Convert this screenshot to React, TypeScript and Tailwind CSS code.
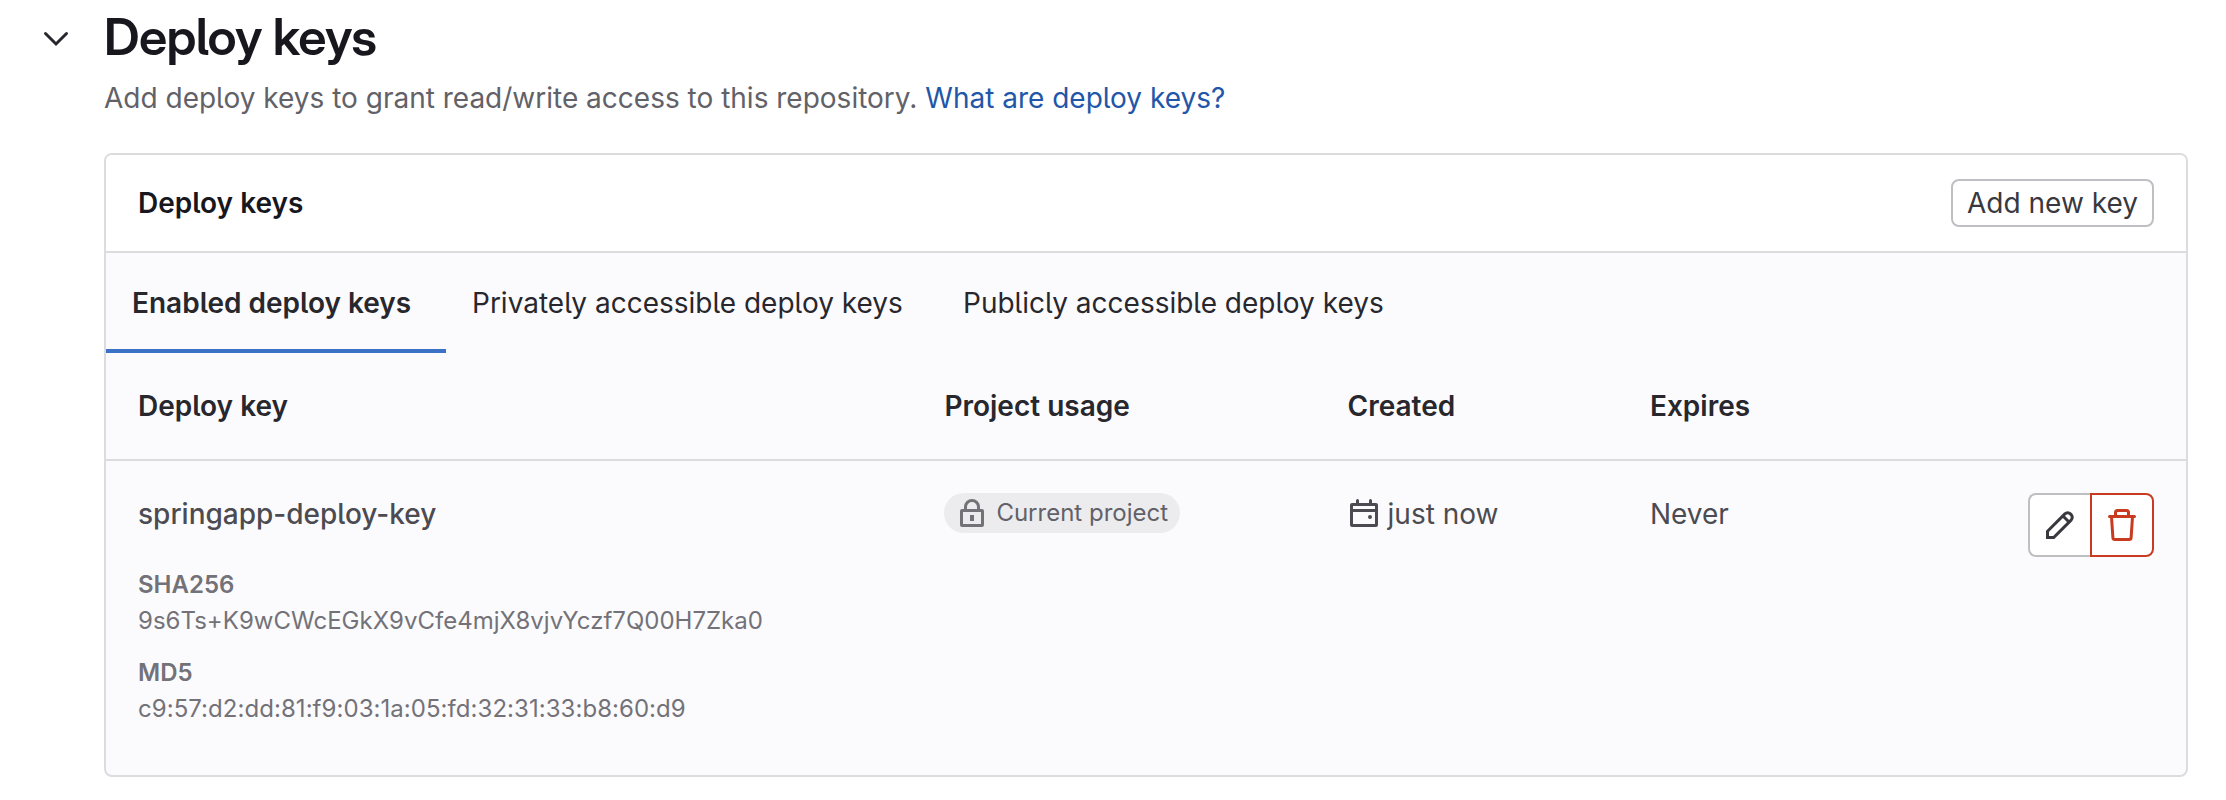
import React from "react";

const tabs = ["Privately accessible deploy keys", "Publicly accessible deploy keys"];

function ChevronDown() {
  return (
    <svg viewBox="0 0 16 16" className="h-8 w-8" fill="none" stroke="#28272d" strokeWidth="1.5" strokeLinecap="round" strokeLinejoin="miter">
      <path d="M2.75 5.75 8 11l5.25-5.25" />
    </svg>
  );
}

function Lock() {
  return (
    <svg viewBox="0 0 16 16" className="h-8 w-8 shrink-0" fill="#737278">
      <path
        fillRule="evenodd"
        clipRule="evenodd"
        d="M8 1a4 4 0 0 0-4 4v1H3a1 1 0 0 0-1 1v7a1 1 0 0 0 1 1h10a1 1 0 0 0 1-1V7a1 1 0 0 0-1-1h-1V5a4 4 0 0 0-4-4zm2.500 5V5a2.500 2.500 0 0 0-5 0v1h5zM3.500 7.500v6h9v-6h-9zM7 9v3h2V9H7z"
      />
    </svg>
  );
}

function Calendar() {
  return (
    <svg viewBox="0 0 16 16" className="h-8 w-8 shrink-0" fill="#4c4b51">
      <path
        fillRule="evenodd"
        clipRule="evenodd"
        d="M5.500 1.750a.75.75 0 0 0-1.500 0V3H2a1 1 0 0 0-1 1v10a1 1 0 0 0 1 1h12a1 1 0 0 0 1-1V4a1 1 0 0 0-1-1h-2V1.750a.75.75 0 0 0-1.500 0V3h-5V1.750zM2.500 4.500V6h11V4.500h-11zm0 3v6h11v-6h-11zM11 11a1 1 0 1 0 0-2 1 1 0 0 0 0 2z"
      />
    </svg>
  );
}

function Pencil() {
  return (
    <svg viewBox="0 0 16 16" className="h-8 w-8 shrink-0" fill="none" stroke="#3a383f" strokeWidth="1.5">
      <path d="M1.750 14.250v-3.100l8.700-8.700a1.950 1.950 0 0 1 2.760 0l.34.34a1.950 1.950 0 0 1 0 2.760l-8.700 8.700z" />
      <path d="M9.500 3.500l3 3" />
    </svg>
  );
}

function Trash() {
  return (
    <svg viewBox="0 0 16 16" className="h-8 w-8 shrink-0" fill="none" stroke="#c93b21" strokeWidth="1.5">
      <path d="M1.750 3.750h12.500" strokeLinecap="round" />
      <path d="M4.750 3.500V1.750a1 1 0 0 1 1-1h4.500a1 1 0 0 1 1 1V3.500" />
      <path d="M2.750 4l.7 10.300a1 1 0 0 0 1 .95h7.100a1 1 0 0 0 1-.95L13.250 4" />
    </svg>
  );
}

function Fingerprint({ label, value, className }: { label: string; value: string; className: string }) {
  return (
    <div className="text-[24px] leading-[36px] text-[#737278]">
      <div className="font-semibold">{label}</div>
      <div className={className}>{value}</div>
    </div>
  );
}

const columns = "grid grid-cols-[806.4px_403.2px_302.4px_1fr] px-8";

export default function App() {
  return (
    <main className="flex h-[800px] w-[2226px] bg-white pl-10 font-['Inter',sans-serif] text-[28px] leading-[40px] text-[#28272d] [font-feature-settings:'cv05']">
      <div className="w-16 pt-[22px]">
        <ChevronDown />
      </div>
      <div className="w-[2084px]">
        <h1 className="pt-[5px] font-['Inter_Display','Inter',sans-serif] text-[51px] leading-[64px] font-semibold tracking-[-0.013em] text-[#18171d]">
          Deploy keys
        </h1>
        <p className="pt-[9px] text-[#626168]">
          Add deploy keys to grant read/write access to this repository.{" "}
          <a href="#" className="text-[#2256a8]">What are deploy keys?</a>
        </p>

        <section className="mt-[35px] h-[624px] overflow-hidden rounded-lg border-2 border-[#dcdcde] bg-[#fbfbfd]">
          <header className="flex h-[98px] items-center justify-between border-b-2 border-[#dcdcde] bg-white px-8">
            <h2 className="font-semibold text-[#18171d]">Deploy keys</h2>
            <button className="h-12 w-[203px] rounded-lg border-2 border-[#bfbfc3] bg-white text-[#3a383f]">Add new key</button>
          </header>

          <nav className="flex h-[100px]">
            <div className="w-[340px] border-b-4 border-[#3b71c6] pt-[30px] pl-[26px] font-semibold">Enabled deploy keys</div>
            {tabs.map((t) => (
              <div key={t} className="w-[491px] pt-[30px] pl-[26px]">{t}</div>
            ))}
          </nav>

          <div className={`${columns} h-[108px] border-b-2 border-[#dcdcde] pt-[33px] font-semibold`}>
            <div>Deploy key</div>
            <div>Project usage</div>
            <div>Created</div>
            <div>Expires</div>
          </div>

          <div className={`${columns} pt-8 text-[#4c4b51]`}>
            <div>
              <div className="pt-px font-medium">springapp-deploy-key</div>
              <div className="flex flex-col gap-4 pt-[33px]">
                <Fingerprint label="SHA256" value="9s6Ts+K9wCWcEGkX9vCfe4mjX8vjvYczf7Q00H7Zka0" className="tracking-[0.01px]" />
                <Fingerprint label="MD5" value="c9:57:d2:dd:81:f9:03:1a:05:fd:32:31:33:b8:60:d9" className="tracking-[0.05px]" />
              </div>
            </div>
            <div>
              <span className="flex h-10 w-[236px] items-center gap-2 rounded-full bg-[#ececef] pl-3 text-[24px] text-[#626168]">
                <Lock />
                Current project
              </span>
            </div>
            <div className="flex h-10 items-center gap-2">
              <Calendar />
              <span className="pt-px">just now</span>
            </div>
            <div className="flex items-start justify-between">
              <span className="pt-px">Never</span>
              <div className="flex h-16">
                <button className="flex w-[62px] items-center justify-center rounded-l-lg border-2 border-r-0 border-[#bfbfc3] bg-white" aria-label="Edit">
                  <Pencil />
                </button>
                <button className="flex w-16 items-center justify-center rounded-r-lg border-2 border-[#c93b21] bg-white" aria-label="Remove">
                  <Trash />
                </button>
              </div>
            </div>
          </div>
        </section>
      </div>
    </main>
  );
}
